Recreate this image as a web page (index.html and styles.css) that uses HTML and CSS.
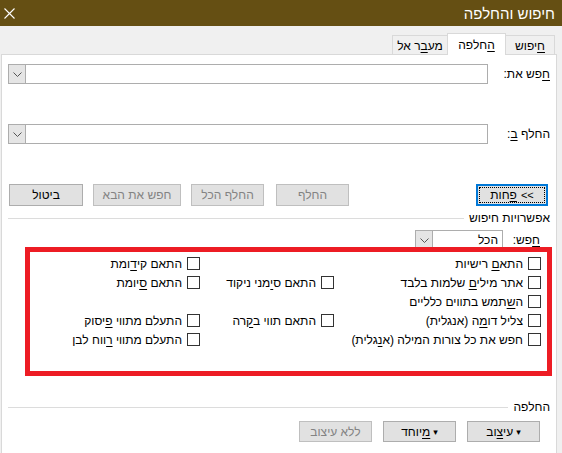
FILE: index.html
```html
<!DOCTYPE html>
<html lang="he">
<head>
<meta charset="utf-8">
<title>חיפוש והחלפה</title>
<link rel="stylesheet" href="styles.css">
</head>
<body>
<div class="window" dir="rtl">
  <div class="titlebar">
    <span class="title">חיפוש והחלפה</span>
    <span class="close"><svg width="11" height="11" viewBox="0 0 11 11"><path d="M0.5 0.5 L10.5 10.5 M10.5 0.5 L0.5 10.5" stroke="#fff" stroke-width="1.1" fill="none"/></svg></span>
  </div>
  <div class="tabs">
    <div class="tab tab-find"><u>ח</u>יפוש</div>
    <div class="tab tab-replace active"><u>ה</u>חלפה</div>
    <div class="tab tab-goto">מע<u>ב</u>ר אל</div>
  </div>
  <div class="panel">
    <div class="field first">
      <div class="field-label"><u>ח</u>פש את:</div>
      <div class="combo">
        <div class="combo-text"></div>
        <div class="combo-btn"><svg width="9" height="5" viewBox="0 0 9 5"><path d="M0.5 0.5 L4.5 4.5 L8.5 0.5" stroke="#555" fill="none"/></svg></div>
      </div>
    </div>
    <div class="field second">
      <div class="field-label">החלף <u>ב</u>:</div>
      <div class="combo">
        <div class="combo-text"></div>
        <div class="combo-btn"><svg width="9" height="5" viewBox="0 0 9 5"><path d="M0.5 0.5 L4.5 4.5 L8.5 0.5" stroke="#555" fill="none"/></svg></div>
      </div>
    </div>
    <div class="btnrow">
      <div class="btn primary w-less"><span class="focus"><span class="chev">&gt;&gt;</span><span><u>פ</u>חות</span></span></div>
      <div class="btngroup">
        <div class="btn disabled w-replace">החלף</div>
        <div class="btn disabled w-replace-all">החלף הכל</div>
        <div class="btn disabled w-next">חפש את הבא</div>
        <div class="btn w-cancel">ביטול</div>
      </div>
    </div>
    <div class="group-head opts-head">
      <span class="group-label">אפשרויות חיפוש</span>
      <span class="group-line"></span>
    </div>
    <div class="search-row">
      <div class="search-label"><u>ח</u>פש:</div>
      <div class="combo small">
        <div class="combo-text">הכל</div>
        <div class="combo-btn"><svg width="9" height="5" viewBox="0 0 9 5"><path d="M0.5 0.5 L4.5 4.5 L8.5 0.5" stroke="#555" fill="none"/></svg></div>
      </div>
    </div>
    <div class="options">
      <label class="opt"><span class="box"></span><span>התא<u>ם</u> רישיות</span></label>
      <div class="cell"></div>
      <label class="opt"><span class="box"></span><span>התאם קי<u>ד</u>ומת</span></label>

      <label class="opt"><span class="box"></span><span>אתר מילי<u>ם</u> שלמות בלבד</span></label>
      <label class="opt"><span class="box"></span><span>התאם ס<u>י</u>מני ניקוד</span></label>
      <label class="opt"><span class="box"></span><span>התאם <u>ס</u>יומת</span></label>

      <label class="opt"><span class="box"></span><span>ה<u>ש</u>תמש בתווים כלליים</span></label>
      <div class="cell"></div>
      <div class="cell"></div>

      <label class="opt"><span class="box"></span><span>צליל דו<u>מ</u>ה (אנגלית)</span></label>
      <label class="opt"><span class="box"></span><span>התאם תווי ב<u>ק</u>רה</span></label>
      <label class="opt"><span class="box"></span><span>התעלם מתווי <u>פ</u>יסוק</span></label>

      <label class="opt"><span class="box"></span><span>חפש את כל צורות המילה (א<u>נ</u>גלית)</span></label>
      <div class="cell"></div>
      <label class="opt"><span class="box"></span><span>התעלם מתווי <u>ר</u>ווח לבן</span></label>
    </div>
    <div class="group-head repl-head">
      <span class="group-label">החלפה</span>
      <span class="group-line"></span>
    </div>
    <div class="fmtrow">
      <div class="btn small-btn"><span class="caret">▾</span>עי<u>צ</u>וב</div>
      <div class="btn small-btn"><span class="caret">▾</span><u>מ</u>יוחד</div>
      <div class="btn small-btn disabled">ללא עיצוב</div>
    </div>
  </div>
</div>
<div class="highlight"></div>
</body>
</html>
```

FILE: styles.css
```css
* { box-sizing: border-box; }
html, body { margin: 0; padding: 0; }
body {
  width: 562px;
  height: 453px;
  overflow: hidden;
  background: #F0F0F0;
  font-family: "Liberation Sans", "DejaVu Sans", sans-serif;
  font-size: 12px;
  color: #000;
}
u { text-decoration: underline; text-underline-offset: 2px; }

.window { direction: rtl; }

.titlebar {
  height: 26px;
  background: #654F13;
  color: #fff;
  display: flex;
  align-items: center;
  justify-content: space-between;
  padding: 0 7px 0 4px;
}
.title { font-size: 15px; }
.close { display: flex; }

.tabs {
  height: 28px;
  display: flex;
  align-items: flex-end;
  padding-right: 7px;
}
.tab {
  height: 19px;
  border: 1px solid #D9D9D9;
  border-bottom: none;
  background: #F0F0F0;
  text-align: center;
  padding-top: 3px;
  line-height: 14px;
}
.tab-find { width: 50px; }
.tab-replace { width: 59px; margin-right: -1px; }
.tab-goto { width: 56px; margin-right: -1px; }
.tab.active {
  height: 22px;
  background: #fff;
  margin-bottom: -1px;
  position: relative;
  z-index: 1;
  padding-top: 4px;
}

.panel {
  background: #fff;
  border: 1px solid #D9D9D9;
  margin-left: 1px;
  margin-right: 5px;
  height: 420px;
  padding: 0 6px;
}

.field {
  display: flex;
  align-items: center;
  height: 20px;
}
.field.first { margin-top: 9px; }
.field.second { margin-top: 40px; }
.field-label { width: 62px; }

.combo {
  flex: 1;
  height: 20px;
  border: 1px solid #ADADAD;
  display: flex;
  background: #fff;
}
.combo-text {
  flex: 1;
  padding: 0 4px;
  line-height: 18px;
}
.combo-btn {
  width: 17px;
  background: #E5E5E5;
  border-right: 1px solid #ADADAD;
  display: flex;
  align-items: center;
  justify-content: center;
}

.btnrow {
  margin-top: 40px;
  display: flex;
  height: 22px;
}
.btngroup {
  margin-right: auto;
  margin-left: 1px;
  display: flex;
  gap: 10px;
}
.btn {
  height: 22px;
  background: #E1E1E1;
  border: 1px solid #ADADAD;
  display: flex;
  align-items: center;
  justify-content: center;
}
.btn.disabled { color: #838383; border-color: #BFBFBF; }
.btn.primary {
  border: 2px solid #0078D7;
  padding: 1px;
  margin-right: 2px;
}
.focus {
  flex: 1;
  align-self: stretch;
  border: 1px dotted #000;
  display: flex;
  align-items: center;
  justify-content: center;
  gap: 4px;
}
.chev { font-size: 11px; }
.w-less { width: 72px; }
.w-replace { width: 73px; margin-left: 2px; }
.w-replace-all { width: 73px; }
.w-next { width: 88px; }
.w-cancel { width: 74px; }

.group-head {
  display: flex;
  align-items: center;
  height: 14px;
}
.opts-head { margin-top: 5px; }
.repl-head { margin-top: 51px; }
.group-line {
  flex: 1;
  height: 1px;
  background: #DCDCDC;
  margin-right: 5px;
}

.search-row {
  margin-top: 5px;
  display: flex;
  align-items: center;
  height: 20px;
  padding-right: 10px;
}
.search-label { width: 37px; }
.combo.small { flex: 0 0 88px; }

.options {
  margin-top: 4px;
  display: grid;
  grid-template-columns: 207px 134px 1fr;
  grid-auto-rows: 19px;
  padding-right: 9px;
}
.opt {
  display: flex;
  align-items: center;
  gap: 5px;
  white-space: nowrap;
}
.box {
  width: 13px;
  height: 13px;
  border: 1px solid #333;
  background: #fff;
  flex: none;
}

.fmtrow {
  margin-top: 7px;
  display: flex;
  gap: 11px;
  padding-right: 10px;
}
.small-btn { width: 73px; height: 21px; }
.caret { font-size: 9px; margin-left: 3px; }

.highlight {
  position: absolute;
  left: 25px;
  top: 247px;
  width: 527px;
  height: 129px;
  border: 5px solid #ED1C24;
}
```
